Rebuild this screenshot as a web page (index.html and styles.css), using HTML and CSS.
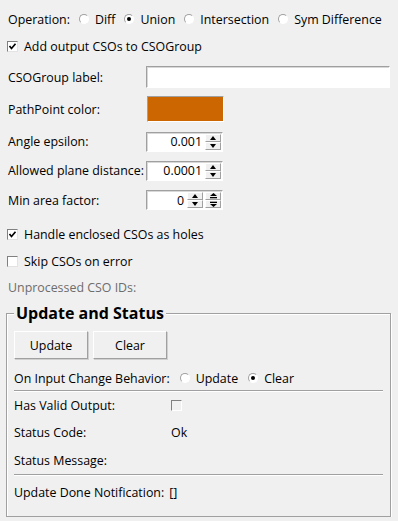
FILE: index.html
```html
<!DOCTYPE html>
<html lang="en">
<head>
    <meta charset="UTF-8">
    <meta name="viewport" content="width=device-width, initial-scale=1.0">
    <title>CSO Boolean Operations</title>
    <link rel="stylesheet" href="styles.css">
</head>
<body>
    <div class="panel">
        <div class="row r-op">
            <span>Operation:</span>
            <label class="opt"><span class="radio"></span>Diff</label>
            <label class="opt"><span class="radio on"></span>Union</label>
            <label class="opt"><span class="radio"></span>Intersection</label>
            <label class="opt"><span class="radio"></span>Sym Difference</label>
        </div>
        <div class="row r-add">
            <label class="check"><span class="box on"><svg width="9" height="9" viewBox="0 0 9 9"><polyline points="1.5,4 3.5,6.5 7.5,1.8" fill="none" stroke="#000" stroke-width="1.7"/></svg></span>Add output CSOs to CSOGroup</label>
        </div>

        <div class="field r-label">
            <span>CSOGroup label:</span>
            <span class="text-input"></span>
        </div>
        <div class="field r-color">
            <span>PathPoint color:</span>
            <span class="color-box"></span>
        </div>
        <div class="field r-angle">
            <span>Angle epsilon:</span>
            <span class="spin-field">
                <span class="value">0.001</span>
                <span class="spinner"><span class="arrow up"></span><span class="arrow down"></span></span>
            </span>
        </div>
        <div class="field r-plane">
            <span>Allowed plane distance:</span>
            <span class="spin-field">
                <span class="value">0.0001</span>
                <span class="spinner"><span class="arrow up"></span><span class="arrow down"></span></span>
            </span>
        </div>
        <div class="field r-area">
            <span>Min area factor:</span>
            <span class="spin-field">
                <span class="value">0</span>
                <span class="spinner"><span class="arrow up"></span><span class="arrow down"></span></span>
                <span class="spinner fast">
                    <span class="arrow"><svg width="7" height="6" viewBox="0 0 7 6"><polygon points="3.5,0 7,3 0,3" fill="#000"/><rect x="0" y="4" width="7" height="1.3" fill="#000"/></svg></span>
                    <span class="arrow"><svg width="7" height="6" viewBox="0 0 7 6"><rect x="0" y="0.7" width="7" height="1.3" fill="#000"/><polygon points="0,3 7,3 3.5,6" fill="#000"/></svg></span>
                </span>
            </span>
        </div>

        <div class="row r-holes">
            <label class="check"><span class="box on"><svg width="9" height="9" viewBox="0 0 9 9"><polyline points="1.5,4 3.5,6.5 7.5,1.8" fill="none" stroke="#000" stroke-width="1.7"/></svg></span>Handle enclosed CSOs as holes</label>
        </div>
        <div class="row r-skip">
            <label class="check"><span class="box"></span>Skip CSOs on error</label>
        </div>
        <div class="row r-unproc">
            <span class="disabled">Unprocessed CSO IDs:</span>
        </div>

        <fieldset class="group">
            <legend>Update and Status</legend>
            <div class="buttons">
                <button type="button">Update</button>
                <button type="button">Clear</button>
            </div>
            <div class="row r-change">
                <span>On Input Change Behavior:</span>
                <label class="opt"><span class="radio"></span>Update</label>
                <label class="opt"><span class="radio on"></span>Clear</label>
            </div>
            <div class="sep"></div>
            <div class="status r-valid">
                <span>Has Valid Output:</span>
                <span class="box flat"></span>
            </div>
            <div class="status r-code">
                <span>Status Code:</span>
                <span>Ok</span>
            </div>
            <div class="status r-msg">
                <span>Status Message:</span>
                <span></span>
            </div>
            <div class="sep"></div>
            <div class="row r-done">
                <span>Update Done Notification:</span>
                <span>[]</span>
            </div>
        </fieldset>
    </div>
</body>
</html>
```

FILE: styles.css
```css
body {
    margin: 0;
    background-color: #f0f0f0;
    font-family: 'Open Sans', sans-serif;
    font-size: 12.4px;
    color: #000;
}
.panel {
    padding: 8px 8px 0 8px;
}
.row {
    display: flex;
    align-items: center;
}
.r-op { height: 22px; }
.r-add { height: 32px; }
.r-holes { height: 36px; }
.r-skip { height: 18px; }
.r-unproc { height: 34px; }

.opt {
    display: flex;
    align-items: center;
    margin-left: 10px;
}
.r-op .opt {
    margin-left: 9px;
}
.radio {
    display: inline-block;
    box-sizing: border-box;
    width: 10px;
    height: 10px;
    margin-right: 6px;
    border-radius: 50%;
    background-color: #fff;
    border: 1px solid;
    border-color: #a0a0a0 #fff #fff #a0a0a0;
    position: relative;
}
.radio.on::after {
    content: '';
    position: absolute;
    left: 2px;
    top: 2px;
    width: 4px;
    height: 4px;
    border-radius: 50%;
    background-color: #000;
}

.check {
    display: flex;
    align-items: center;
    margin-left: -1px;
}
.box {
    display: inline-flex;
    align-items: center;
    justify-content: center;
    box-sizing: border-box;
    width: 11px;
    height: 11px;
    margin-right: 6px;
    background-color: #fff;
    border: 1px solid;
    border-color: #808080 #e3e3e3 #e3e3e3 #808080;
}
.box.flat {
    background-color: #f0f0f0;
    border-color: #808080 #fff #fff #808080;
}

.field {
    display: grid;
    grid-template-columns: 138px auto;
    align-items: center;
}
.r-label { height: 30px; }
.r-color { height: 34px; }
.r-angle { height: 31px; }
.r-plane { height: 27px; }
.r-area { height: 32px; }

.text-input {
    box-sizing: border-box;
    height: 22px;
    background-color: #fff;
    border: 1px solid;
    border-color: #a0a0a0 #fff #fff #a0a0a0;
    box-shadow: inset 1px 1px 0 #d8d8d8;
}
.color-box {
    box-sizing: border-box;
    width: 77px;
    height: 26px;
    margin-left: 1px;
    background-color: #cc6600;
    border: 1px solid;
    border-color: #a0a0a0 #fff #fff #a0a0a0;
}
.spin-field {
    display: flex;
    align-items: center;
    box-sizing: border-box;
    width: 77px;
    height: 20px;
    padding: 0 1px 0 2px;
    background-color: #fff;
    border: 1px solid;
    border-color: #a0a0a0 #fff #fff #a0a0a0;
    box-shadow: inset 1px 1px 0 #d8d8d8;
}
.spin-field .value {
    flex: 1;
    text-align: right;
    padding-right: 3px;
}
.spinner {
    display: flex;
    flex-direction: column;
    width: 16px;
    height: 16px;
}
.spinner.fast {
    margin-left: 2px;
}
.arrow {
    display: flex;
    align-items: center;
    justify-content: center;
    box-sizing: border-box;
    height: 8px;
    background-color: #f0f0f0;
    border: 1px solid;
    border-color: #fff #a0a0a0 #a0a0a0 #fff;
}
.arrow.up::after, .arrow.down::after {
    content: '';
    width: 0;
    height: 0;
    border-left: 3.5px solid transparent;
    border-right: 3.5px solid transparent;
}
.arrow.up::after {
    border-bottom: 4px solid #000;
}
.arrow.down::after {
    border-top: 4px solid #000;
}

.disabled {
    color: #6d6d6d;
}

.group {
    margin: 0 -1px 0 -2px;
    padding: 0 7px 8px 7px;
    border: 1px solid #a0a0a0;
    box-shadow: inset 1px 1px 0 #fff, 1px 1px 0 #fff;
}
.group legend {
    padding: 0 2px;
    font-size: 16px;
    font-weight: bold;
    line-height: 18px;
    background-color: #f0f0f0;
}
.buttons {
    display: flex;
    gap: 5px;
    margin-top: 9px;
}
button {
    box-sizing: border-box;
    width: 74px;
    height: 28px;
    font-family: inherit;
    font-size: 12.4px;
    color: #000;
    background-color: #f0f0f0;
    border: 1px solid;
    border-color: #fff #a0a0a0 #a0a0a0 #fff;
    box-shadow: 1px 1px 0 #d0d0d0;
}
.r-change {
    height: 24px;
    margin-top: 7px;
}
.sep {
    height: 1px;
    border-bottom: 1px solid #fff;
    background-color: #a0a0a0;
}
.status {
    display: grid;
    grid-template-columns: 157px auto;
    align-items: center;
}
.r-valid { height: 26px; }
.r-code { height: 28px; }
.r-msg { height: 28px; }
.r-done {
    height: 32px;
    gap: 5px;
}
```
